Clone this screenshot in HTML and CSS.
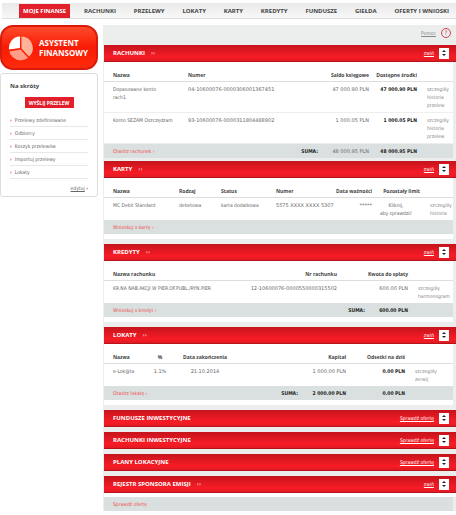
FILE: index.html
```
<!DOCTYPE html>
<html lang="pl">
<head>
<meta charset="utf-8">
<title>Moje finanse</title>
<link rel="stylesheet" href="styles.css">
</head>
<body>
<nav class="menu">
<a href="#" class="active">MOJE FINANSE</a>
<a href="#">RACHUNKI</a>
<a href="#">PRZELEWY</a>
<a href="#">LOKATY</a>
<a href="#">KARTY</a>
<a href="#">KREDYTY</a>
<a href="#">FUNDUSZE</a>
<a href="#">GIEŁDA</a>
<a href="#">OFERTY I WNIOSKI</a>
</nav>

<div class="page">
<aside>
<a href="#" class="assistant">
<svg width="26" height="26" viewBox="0 0 26 26">
<path d="M13.5 13.5V1.5A11.5 11.5 0 0 1 21 21.500Z" fill="#ffb199"/>
<path d="M12 13V1.500A11.500 11.500 0 0 0 1 14.500Z" fill="#fff"/>
<path d="M12.500 14.500L1.300 16.500A11.800 11.800 0 0 0 20 22.700Z" fill="#ff9d86"/>
</svg>
<span>ASYSTENT<br>FINANSOWY</span>
</a>
<div class="shortcuts">
<h2>Na skróty</h2>
<button class="send">WYŚLIJ PRZELEW</button>
<ul>
<li><a href="#">Przelewy zdefiniowane</a></li>
<li><a href="#">Odbiorcy</a></li>
<li><a href="#">Koszyk przelewów</a></li>
<li><a href="#">Importuj przelewy</a></li>
<li><a href="#">Lokaty</a></li>
</ul>
<p class="edit"><a href="#">edytuj</a> <b>›</b></p>
</div>
</aside>

<main>
<div class="help"><a href="#">Pomoc</a><span>?</span></div>

<section class="first">
<header><h3>RACHUNKI</h3><i>››</i><a href="#">zwiń</a><button class="move" aria-label="Przesuń"></button></header>
<table>
<colgroup><col class="w84"><col class="w130"><col class="w51"><col class="w48"><col></colgroup>
<thead>
<tr><th>Nazwa</th><th>Numer</th><th class="right">Saldo księgowe</th><th class="right">Dostępne środki</th><th></th></tr>
</thead>
<tbody>
<tr><td>Dopasowane konto<br>rach1</td><td class="num">04-10600076-0000306001367451</td><td class="num right">47 000.90 PLN</td><td class="right"><b>47 000.90 PLN</b></td><td class="links"><a href="#">szczegóły</a><a href="#">historia</a><a href="#">przelew</a></td></tr>
<tr><td>Konto SEZAM Oszczędzam</td><td class="num">93-10600076-0000311804488902</td><td class="num right">1 000.05 PLN</td><td class="right"><b>1 000.05 PLN</b></td><td class="links"><a href="#">szczegóły</a><a href="#">historia</a><a href="#">przelew</a></td></tr>
</tbody>
<tfoot>
<tr><td><a href="#">Otwórz rachunek ›</a></td><td class="right"><b>SUMA:</b></td><td class="num right">48 000.95 PLN</td><td class="right"><b>48 000.95 PLN</b></td><td></td></tr>
</tfoot>
</table>
</section>

<section>
<header><h3>KARTY</h3><i>››</i><a href="#">zwiń</a><button class="move" aria-label="Przesuń"></button></header>
<table>
<colgroup><col class="w75"><col class="w42"><col class="w55"><col class="w59"><col class="w37"><col class="w48"><col></colgroup>
<thead>
<tr><th>Nazwa</th><th>Rodzaj</th><th>Status</th><th>Numer</th><th class="right">Data ważności</th><th class="right">Pozostały limit</th><th></th></tr>
</thead>
<tbody>
<tr><td>MC Debit Standard</td><td>debetowa</td><td>karta dodatkowa</td><td class="num">5575 XXXX XXXX 5307</td><td class="num right">*****</td><td class="center">Kliknij,<br>aby sprawdzić</td><td class="links"><a href="#">szczegóły</a><a href="#">historia</a></td></tr>
</tbody>
<tfoot>
<tr><td colspan="7"><a href="#">Wnioskuj o kartę ›</a></td></tr>
</tfoot>
</table>
</section>

<section>
<header><h3>KREDYTY</h3><i>››</i><a href="#">zwiń</a><button class="move" aria-label="Przesuń"></button></header>
<table>
<colgroup><col class="w130"><col class="w103"><col class="w28"><col class="w43"><col></colgroup>
<thead>
<tr><th>Nazwa rachunku</th><th class="right">Nr rachunku</th><th></th><th class="right">Kwota do spłaty</th><th></th></tr>
</thead>
<tbody>
<tr><td>KR.NA NAB.AKCJI W PIER.OF.PUBL./RYN.PIER</td><td class="num right">12-10600076-0000550000315502</td><td></td><td class="num right">600.00 PLN</td><td class="links"><a href="#">szczegóły</a><a href="#">harmonogram</a></td></tr>
</tbody>
<tfoot>
<tr><td><a href="#">Wnioskuj o kredyt ›</a></td><td></td><td class="right"><b>SUMA:</b></td><td class="right"><b>600.00 PLN</b></td><td></td></tr>
</tfoot>
</table>
</section>

<section>
<header><h3>LOKATY</h3><i>››</i><a href="#">zwiń</a><button class="move" aria-label="Przesuń"></button></header>
<table>
<colgroup><col class="w42"><col class="w28"><col class="w62"><col class="w62"><col class="w48"><col class="w59"><col></colgroup>
<thead>
<tr><th>Nazwa</th><th class="center">%</th><th class="center">Data zakończenia</th><th></th><th class="right">Kapitał</th><th class="right">Odsetki na dziś</th><th></th></tr>
</thead>
<tbody>
<tr><td>e-Lok@ta</td><td class="num center">1.1%</td><td class="num center">21.10.2014</td><td></td><td class="num right">1 000.00 PLN</td><td class="right"><b>0.00 PLN</b></td><td class="links"><a href="#">szczegóły</a><a href="#">zerwij</a></td></tr>
</tbody>
<tfoot>
<tr><td colspan="3"><a href="#">Otwórz lokatę ›</a></td><td class="right"><b>SUMA:</b></td><td class="right"><b>2 000.00 PLN</b></td><td class="right"><b>0.00 PLN</b></td><td></td></tr>
</tfoot>
</table>
</section>

<section>
<header><h3>FUNDUSZE INWESTYCYJNE</h3><a href="#">Sprawdź ofertę</a><button class="move" aria-label="Przesuń"></button></header>
</section>
<section>
<header><h3>RACHUNKI INWESTYCYJNE</h3><a href="#">Sprawdź ofertę</a><button class="move" aria-label="Przesuń"></button></header>
</section>
<section>
<header><h3>PLANY LOKACYJNE</h3><a href="#">Sprawdź ofertę</a><button class="move" aria-label="Przesuń"></button></header>
</section>
<section class="last">
<header><h3>REJESTR SPONSORA EMISJI</h3><i>››</i><a href="#">zwiń</a><button class="move" aria-label="Przesuń"></button></header>
</section>
<p class="offer"><a href="#">Sprawdź ofertę</a></p>
</main>
</div>
</body>
</html>
```
FILE: styles.css
```
*{
box-sizing: border-box;
}
body{
margin: 0;
background-color: #fff;
color: #666;
font-family: "DejaVu Sans Condensed", "DejaVu Sans", sans-serif;
font-size: 5px;
line-height: 8px;
}
h2, h3, p, ul{
margin: 0;
padding: 0;
}
a{
color: inherit;
}
button{
border: none;
padding: 0;
font-family: inherit;
}
.menu{
display: flex;
justify-content: space-between;
align-items: center;
height: 16px;
margin: 3px 0 6px 2px;
padding: 0 7px 0 17px;
background: linear-gradient(#e9e9e9, #f8f8f8);
border-bottom: 1px solid #ddd;
font-family: "Open Sans", sans-serif;
font-size: 6px;
font-weight: bold;
color: #444;
}
.menu a{
text-decoration: none;
white-space: nowrap;
}
.menu .active{
margin-right: -4px;
padding: 3px 4px;
background-color: #e2202c;
color: #fff;
}
.page{
display: flex;
gap: 5px;
}
aside{
flex: none;
width: 98px;
}
.assistant{
display: flex;
align-items: center;
gap: 5px;
height: 45px;
padding-left: 6px;
border: 2px solid #d81a0c;
border-radius: 13px;
background: linear-gradient(#ff4a2c, #f81c04 50%, #ff2a0c);
color: #fff;
font-family: "Open Sans", sans-serif;
font-size: 8px;
font-weight: bold;
line-height: 10px;
text-decoration: none;
}
.shortcuts{
margin-top: 3px;
padding: 8px 9px 2px;
border: 1px solid #ddd;
border-radius: 3px;
}
.shortcuts h2{
font-family: "Open Sans", sans-serif;
font-size: 6px;
line-height: 8px;
color: #444;
}
.send{
display: block;
width: 49px;
height: 11px;
margin: 7px auto 6px;
background-color: #e2202c;
color: #fff;
font-family: "Open Sans", sans-serif;
font-size: 5px;
font-weight: bold;
}
.shortcuts ul{
list-style: none;
}
.shortcuts li{
padding: 2px 0;
border-bottom: 1px solid #e8e8e8;
line-height: 8px;
}
.shortcuts li::before{
content: "›";
margin-right: 3px;
color: #e2202c;
font-weight: bold;
}
.shortcuts li a{
text-decoration: none;
}
.edit{
padding: 5px 0 2px;
text-align: right;
}
.edit b{
color: #e2202c;
}
main{
flex: 1;
min-width: 0;
padding-left: 1px;
background-color: #eceeee;
}
.help{
display: flex;
justify-content: flex-end;
align-items: center;
gap: 5px;
height: 20px;
padding: 0 5px 4px 0;
color: #888;
}
.help span{
width: 10px;
height: 10px;
border: 1px solid #d8404a;
border-radius: 50%;
color: #d8404a;
font-size: 6px;
text-align: center;
}
section{
margin-bottom: 5px;
}
section header{
display: flex;
align-items: center;
height: 17px;
padding: 0 7px 0 9px;
background: linear-gradient(#c5141c, #f81c26 75%, #e01a22);
border-bottom: 1px solid #b8141c;
color: #fff;
}
h3{
font-family: "Open Sans", sans-serif;
font-size: 6px;
font-weight: bold;
}
header i{
margin-left: 6px;
font-style: normal;
font-size: 6px;
}
header a{
margin-left: auto;
}
.move{
display: flex;
flex-direction: column;
justify-content: center;
align-items: center;
gap: 2px;
width: 10px;
height: 11px;
margin-left: 5px;
background-color: #fff;
}
.move::before, .move::after{
content: "";
border-left: 2px solid transparent;
border-right: 2px solid transparent;
}
.move::before{
border-bottom: 2px solid #222;
}
.move::after{
border-top: 2px solid #222;
}
table{
width: calc(100% - 3px);
table-layout: fixed;
border-collapse: separate;
border-spacing: 0;
background-color: #fff;
border-bottom: 5px solid #fff;
}
th, td{
padding: 3px 0;
text-align: left;
vertical-align: top;
white-space: nowrap;
}
th{
height: 20px;
padding: 9px 0 2px;
border-bottom: 1px solid #ddd;
font-family: "Open Sans", sans-serif;
color: #444;
}
th:first-child, td:first-child{
padding-left: 9px;
}
.num{
font-family: "DejaVu Sans", sans-serif;
}
td b{
color: #222;
}
.right{
text-align: right;
}
.center{
text-align: center;
}
.links{
padding-left: 10px;
color: #888;
}
.links a{
display: block;
text-decoration: none;
}
tfoot td{
height: 14px;
background-color: #dae0e0;
}
tfoot a, .offer a{
color: #f04a4a;
text-decoration: none;
}
.first{
margin-bottom: 3px;
}
.first table{
border-bottom: none;
}
.first tbody td{
border-bottom: 1px solid #eee;
}
.last{
margin-bottom: 0;
border-bottom: 4px solid #fff;
}
.offer{
margin-right: 3px;
padding: 3px 9px;
background-color: #dae0e0;
}
.w28{ width: 28px; }
.w37{ width: 37px; }
.w42{ width: 42px; }
.w43{ width: 43px; }
.w48{ width: 48px; }
.w51{ width: 51px; }
.w55{ width: 55px; }
.w59{ width: 59px; }
.w62{ width: 62px; }
.w75{ width: 75px; }
.w84{ width: 84px; }
.w103{ width: 103px; }
.w130{ width: 130px; }
```
